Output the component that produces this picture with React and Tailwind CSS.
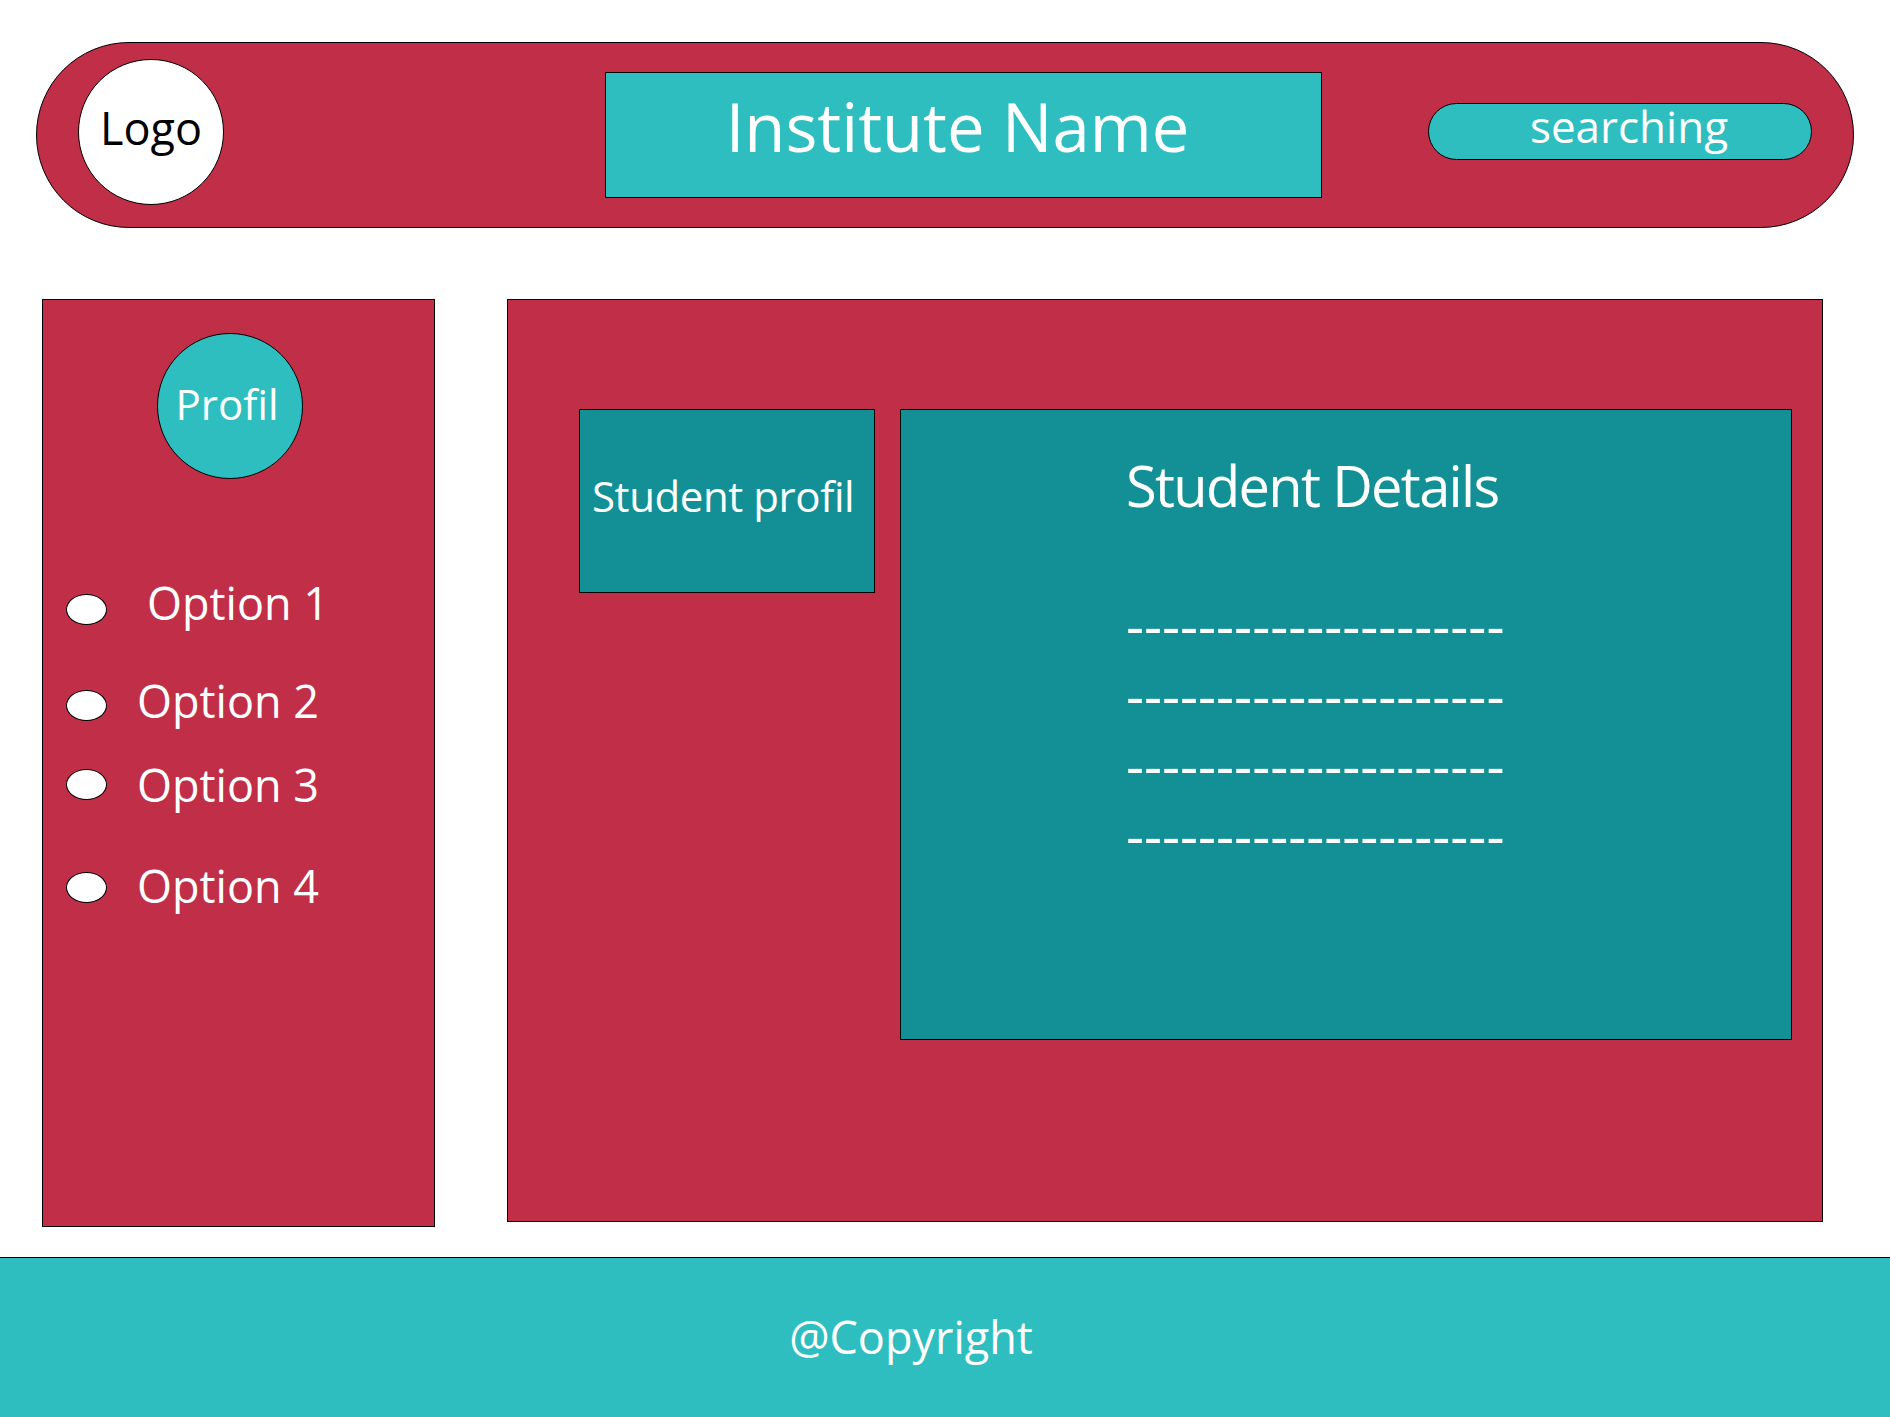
import React from 'react';

const options = [
    { label: 'Option 1', top: 'mt-[108px]', text: 'ml-[40px] mb-[14px]' },
    { label: 'Option 2', top: 'mt-[52px]', text: 'ml-[30px] mb-[10px]' },
    { label: 'Option 3', top: 'mt-[35px]', text: 'ml-[30px]' },
    { label: 'Option 4', top: 'mt-[59px]', text: 'ml-[30px] mb-[4px]' },
];

function App() {
    return (
        <div className="w-[1890px] h-[1417px] bg-white flex flex-col overflow-hidden font-['Open_Sans',sans-serif]">
            {/* header */}
            <header className="mt-[42px] mx-[36px] h-[186px] rounded-full border border-black bg-[#c02e48] flex items-start">
                <div className="mt-[16px] ml-[41px] w-[146px] h-[146px] rounded-full border border-black bg-white flex items-center justify-center">
                    <span className="text-[45px] leading-none text-black mb-[10px]">Logo</span>
                </div>
                <div className="mt-[29px] ml-[381px] w-[717px] h-[126px] border border-black bg-[#2fbebf] flex justify-center pt-[20px] pr-[12px]">
                    <span className="text-[67px] leading-none text-white whitespace-nowrap">Institute Name</span>
                </div>
                <div className="mt-[60px] ml-[106px] w-[384px] h-[57px] rounded-full border border-black bg-[#2fbebf] flex justify-center pl-[18px]">
                    <span className="text-[44px] leading-none text-white">searching</span>
                </div>
            </header>

            <div className="mt-[71px] flex items-start">
                {/* sidebar */}
                <aside className="ml-[42px] w-[393px] h-[928px] border border-black bg-[#c02e48] flex flex-col">
                    <div className="mt-[33px] ml-[114px] w-[146px] h-[146px] rounded-full border border-black bg-[#2fbebf] flex justify-center pt-[49px] pr-[6px]">
                        <span className="text-[42px] leading-none text-white">Profil</span>
                    </div>
                    {options.map((o) => (
                        <div key={o.label} className={`${o.top} h-[44px] flex items-center`}>
                            <span className="ml-[23px] w-[41px] h-[31px] rounded-[50%] border border-black bg-white" />
                            <span className={`${o.text} text-[45px] leading-none text-white whitespace-nowrap`}>{o.label}</span>
                        </div>
                    ))}
                </aside>

                {/* main panel */}
                <main className="ml-[72px] w-[1316px] h-[923px] border border-black bg-[#c02e48] flex items-start">
                    <div className="mt-[109px] ml-[71px] w-[296px] h-[184px] border border-black bg-[#139095] pt-[65px] pl-[12px]">
                        <span className="block text-[42px] leading-none tracking-[-0.01em] text-white whitespace-nowrap">Student profil</span>
                    </div>
                    <div className="mt-[109px] ml-[25px] w-[892px] h-[631px] border border-black bg-[#139095] pt-[47px] pl-[225px]">
                        <h2 className="text-[56px] leading-none tracking-[-0.03em] text-white whitespace-nowrap">Student Details</h2>
                        <div className="mt-[76px] text-[56px] leading-[70px] text-white whitespace-nowrap">
                            <p>---------------------</p>
                            <p>---------------------</p>
                            <p>---------------------</p>
                            <p>---------------------</p>
                        </div>
                    </div>
                </main>
            </div>

            {/* footer */}
            <footer className="mt-[30px] h-[160px] border-t border-black bg-[#2fbebf] flex justify-center pt-[56px] pr-[68px]">
                <span className="text-[45px] leading-none text-white">@Copyright</span>
            </footer>
        </div>
    );
}

export default App;
